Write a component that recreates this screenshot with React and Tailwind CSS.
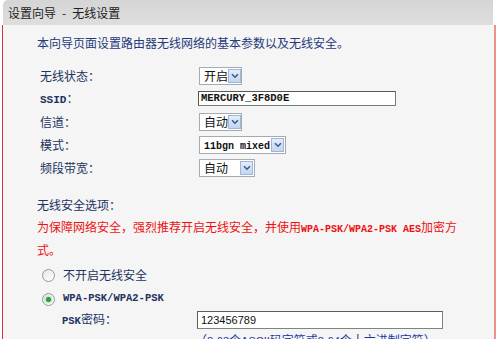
import React from 'react';

const cjk = "font-['Noto_Sans_CJK_SC',sans-serif]";
const mono = "font-['Liberation_Mono','Noto_Sans_CJK_SC',monospace]";

const Arrow = () => (
  <span className="flex h-[14px] w-[13px] shrink-0 items-center justify-center border border-[#9fb6da] bg-gradient-to-b from-[#e3ecfa] to-[#c3d5f1]">
    <svg width="8" height="6" viewBox="0 0 8 6">
      <path d="M1 1.2 L4 4.2 L7 1.2" fill="none" stroke="#3d5a8c" strokeWidth="1.6" />
    </svg>
  </span>
);

const Select = ({ children, width }) => (
  <div className={`flex h-[18px] items-center justify-between border border-[#a7abb0] bg-white pl-[4px] pr-[1px] ${width}`}>
    <span className="whitespace-nowrap leading-none text-[#111]">{children}</span>
    <Arrow />
  </div>
);

const Row = ({ label, children }) => (
  <div className="flex h-[23px] items-center">
    <div className="w-[162px] pl-[3px] text-[#22335f]">{label}</div>
    {children}
  </div>
);

const Radio = ({ checked }) => (
  <span className="flex h-[13px] w-[13px] items-center justify-center rounded-full border border-[#8d99a6] bg-gradient-to-br from-[#e4e7ea] to-white">
    {checked && <span className="h-[5px] w-[5px] rounded-full bg-[#2d9b3c] shadow-[0_0_2px_1px_#a9dfb0]"></span>}
  </span>
);

export default function App() {
  return (
    <div className={`h-[339px] w-[500px] overflow-hidden bg-white text-[12px] ${cjk}`}>
      {/* title bar */}
      <div className="ml-[3px] flex h-[25px] w-[490px] items-center rounded-tl-[5px] bg-gradient-to-b from-[#d5d5d5] to-[#dedede] pl-[5px] text-[#222]">
        设置向导<span className="mx-[6px]">-</span>无线设置
      </div>

      <div className="ml-[2px] h-[314px] w-[494px] border-l border-r-2 border-l-[#cf3434] border-r-[#e9938c] bg-[#f5f5f5] pl-[34px] pt-[9px]">
        <div className="h-[18px] leading-[18px] text-[#26397a]">本向导页面设置路由器无线网络的基本参数以及无线安全。</div>

        <div className="mt-[12px]">
          <Row label="无线状态：">
            <Select width="w-[43px]">开启</Select>
          </Row>
          <Row label={<><span className={`${mono} text-[11px] font-bold`}>SSID</span>：</>}>
            <div className={`ml-[-1px] flex h-[15px] w-[198px] items-center border border-[#6f7f72] border-t-[#4f5a52] border-l-[#4f5a52] bg-white pl-[2px] text-[10.5px] ${mono} font-bold text-[#111]`}>
              MERCURY_3F8D0E
            </div>
          </Row>
          <Row label="信道：">
            <Select width="w-[43px]">自动</Select>
          </Row>
          <Row label="模式：">
            <Select width="w-[87px]">
              <span className={`${mono} text-[10px] font-bold`}>11bgn mixed</span>
            </Select>
          </Row>
          <Row label="频段带宽：">
            <Select width="w-[56px]">自动</Select>
          </Row>
        </div>

        <div className="mt-[16px] h-[20px] leading-[20px] text-[#22335f]">无线安全选项：</div>
        <div className="mt-[2px] leading-[20px] text-[#ee1111]">
          为保障网络安全，强烈推荐开启无线安全，并使用<span className={`${mono} text-[10px] font-bold`}>WPA-PSK/WPA2-PSK AES</span>加密方
          <br />
          式。
        </div>

        <div className="mt-[3px] flex h-[24px] items-center pl-[5px] text-[#22335f]">
          <Radio />
          <span className="ml-[8px]">不开启无线安全</span>
        </div>
        <div className="flex h-[24px] items-center pl-[5px] text-[#22335f]">
          <Radio checked />
          <span className={`ml-[8px] ${mono} text-[10.5px] font-bold`}>WPA-PSK/WPA2-PSK</span>
        </div>
        <div className="flex h-[18px] items-center text-[#22335f]">
          <div className="w-[160px] pl-[25px]">
            <span className={`${mono} text-[10.5px] font-bold`}>PSK</span>密码：
          </div>
          <div className="flex h-[18px] w-[246px] items-center border border-[#7a887c] border-t-[#56615a] border-l-[#56615a] bg-white pl-[3px] text-[11px] font-['Liberation_Sans',sans-serif] text-[#111]">
            123456789
          </div>
        </div>
        <div className="mt-[2px] whitespace-nowrap pl-[158px] leading-[18px] text-[#1f36a3]">
          （<span className="font-['Liberation_Sans',sans-serif] text-[11px]">8-63</span>个<span className="font-['Liberation_Sans',sans-serif] text-[11px]">ASCII</span>码字符或<span className="font-['Liberation_Sans',sans-serif] text-[11px]">8-64</span>个十六进制字符）
        </div>
      </div>
    </div>
  );
}
